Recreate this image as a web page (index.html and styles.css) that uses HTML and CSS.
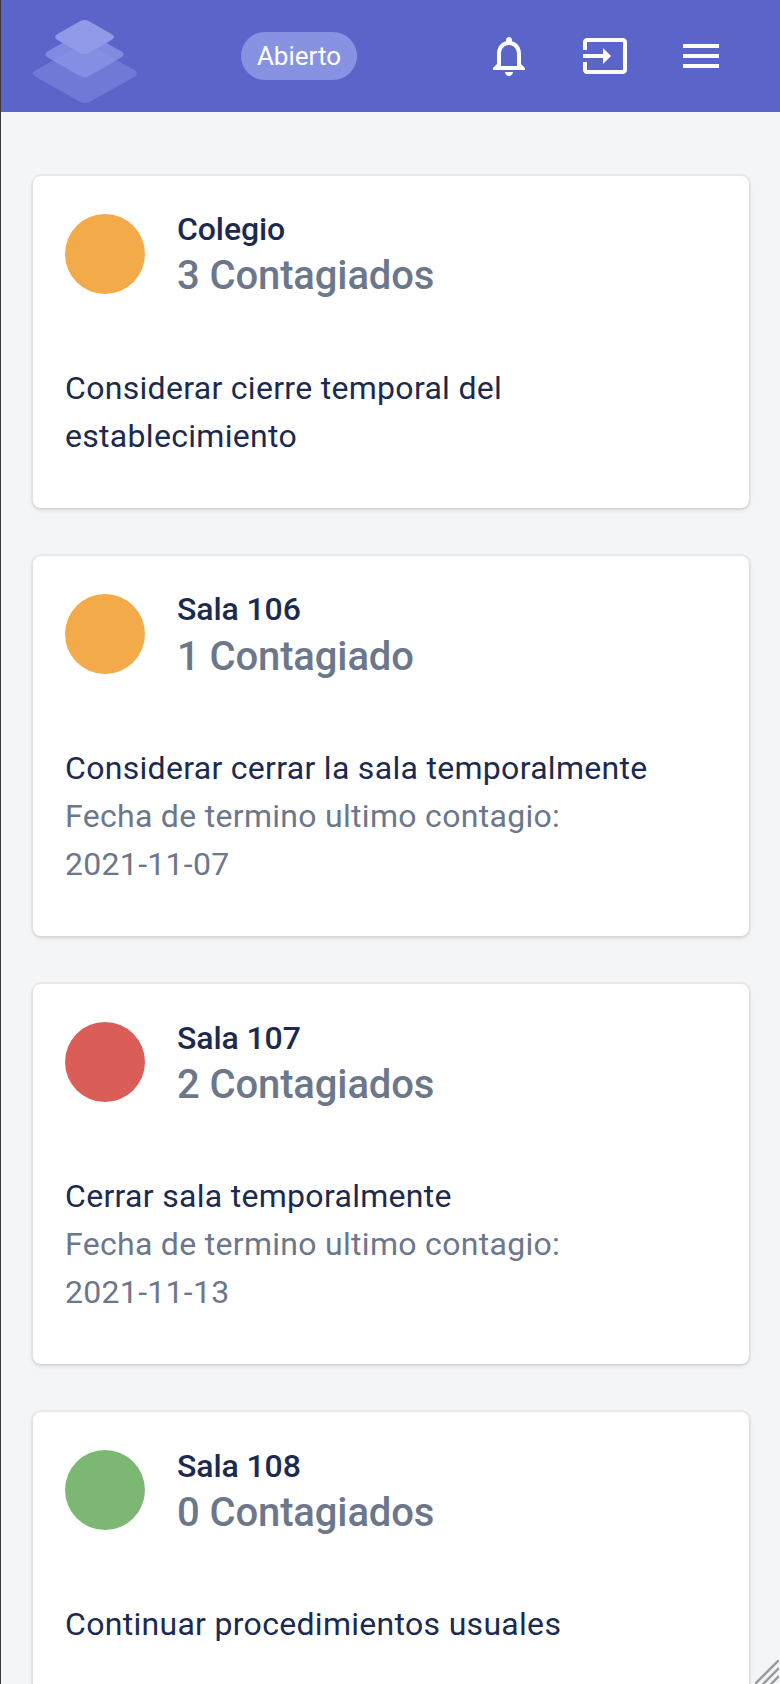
FILE: index.html
```html
<!DOCTYPE html>
<html lang="es">
<head>
<meta charset="utf-8">
<title>Contagios</title>
<link rel="stylesheet" href="styles.css">
</head>
<body>
<header class="topbar">
  <svg class="logo" viewBox="0 0 104 84">
    <path fill="#707ad6" d="M46.500 25.500q5.500-3 11 0L101 50q6 3.500 0 7L57.500 81.500q-5.500 3-11 0L3 57q-6-3.500 0-7z"/>
    <path fill="#8a94e6" fill-opacity=".8" d="M46.500 13.200q5-2.800 10 0L88.200 31.200q5 3.200 0 6.400L56.500 55.800q-5 2.800-10 0L14.800 37.600q-5-3.200 0-6.400z"/>
    <path fill="#909ae9" d="M46.500 1.500q5-2.800 10 0L78.500 14q5 3 0 6L56.500 32.700q-5 2.800-10 0L24.500 20q-5-3 0-6z"/>
  </svg>
  <span class="chip">Abierto</span>
  <nav class="actions">
    <svg class="icon" viewBox="0 0 24 24"><path d="M12 22c1.100 0 2-.9 2-2h-4c0 1.100.9 2 2 2zm6-6v-5c0-3.070-1.630-5.640-4.500-6.320V4c0-.83-.67-1.500-1.500-1.500s-1.500.67-1.500 1.500v.68C7.640 5.360 6 7.920 6 11v5l-2 2v1h16v-1l-2-2zm-2 1H8v-6c0-2.480 1.510-4.500 4-4.500s4 2.020 4 4.500v6z"/></svg>
    <svg class="icon" viewBox="0 0 24 24"><path d="M21 3.010H3c-1.100 0-2 .9-2 2V9h2V4.990h18v14.030H3V15H1v4.010c0 1.100.9 1.980 2 1.980h18c1.100 0 2-.88 2-1.980v-14c0-1.110-.9-2-2-2zM11 16l4-4-4-4v3H1v2h10v3z"/></svg>
    <svg class="icon" viewBox="0 0 24 24"><path d="M3 18h18v-2H3v2zm0-5h18v-2H3v2zm0-7v2h18V6H3z"/></svg>
  </nav>
</header>
<main class="cards">
  <article class="card">
    <div class="card-head"><span class="dot orange"></span><div><h2 class="title">Colegio</h2><p class="count">3 Contagiados</p></div></div>
    <div class="card-body"><p>Considerar cierre temporal del establecimiento</p></div>
  </article>
  <article class="card">
    <div class="card-head"><span class="dot orange"></span><div><h2 class="title">Sala 106</h2><p class="count">1 Contagiado</p></div></div>
    <div class="card-body"><p>Considerar cerrar la sala temporalmente</p><p class="muted">Fecha de termino ultimo contagio:<br>2021-11-07</p></div>
  </article>
  <article class="card">
    <div class="card-head"><span class="dot red"></span><div><h2 class="title">Sala 107</h2><p class="count">2 Contagiados</p></div></div>
    <div class="card-body"><p>Cerrar sala temporalmente</p><p class="muted">Fecha de termino ultimo contagio:<br>2021-11-13</p></div>
  </article>
  <article class="card">
    <div class="card-head"><span class="dot green"></span><div><h2 class="title">Sala 108</h2><p class="count">0 Contagiados</p></div></div>
    <div class="card-body"><p>Continuar procedimientos usuales</p></div>
  </article>
</main>
<svg class="resizer" viewBox="0 0 24 24"><path d="M0 24L24 0M8 24L24 8M16 24l8-8"/></svg>
</body>
</html>
```

FILE: styles.css
```css
* { box-sizing: border-box; margin: 0; }
html { height: 100%; overflow: hidden; }
body {
  height: 1684px;
  overflow: hidden;
  position: relative;
  border-left: 1px solid #38383c;
  background: #f4f5f7;
  font-family: Roboto, sans-serif;
  color: #1b2a4e;
}
.topbar {
  height: 112px;
  display: flex;
  align-items: center;
  padding: 0 55px 0 32px;
  background: #5a64c9;
}
.logo { width: 104px; height: 84px; margin-top: 11px; }
.chip {
  width: 116px;
  height: 48px;
  margin-left: 104px;
  border-radius: 24px;
  background: #8792e3;
  color: #fff;
  font-size: 26px;
  line-height: 48px;
  text-align: center;
}
.actions { display: flex; gap: 48px; margin-left: auto; }
.icon { width: 48px; height: 48px; fill: #fff; }
.cards {
  display: flex;
  flex-direction: column;
  gap: 48px;
  padding: 64px 31px 0 32px;
}
.card {
  flex: none;
  border-radius: 8px;
  background: #fff;
  box-shadow: 0 0 0 2px rgba(63, 63, 68, .05), 0 2px 4px rgba(63, 63, 68, .15);
}
.card-head {
  height: 156px;
  display: flex;
  align-items: center;
  gap: 32px;
  padding: 32px;
}
.dot { width: 80px; height: 80px; border-radius: 50%; }
.orange { background: #f2ab48; }
.red { background: #db5d57; }
.green { background: #7cb874; }
.title { font-size: 32px; font-weight: 500; line-height: 44px; letter-spacing: -.1px; }
.count { font-size: 40px; font-weight: 500; line-height: 50px; letter-spacing: -.12px; color: #6c778b; }
.card + .card .count { margin: 1px 0 -1px; }
.card:nth-child(n+3) .title { margin-top: 2px; }
.card:nth-child(n+3) .count { margin: 0; }
.card-body { padding: 32px 32px 48px; font-size: 32px; line-height: 48px; letter-spacing: .3px; }
.muted { color: #6c778b; }
.resizer {
  position: absolute;
  right: 1px;
  bottom: 0;
  width: 24px;
  height: 24px;
  fill: none;
  stroke: #999;
  stroke-width: 2.4;
}
```
